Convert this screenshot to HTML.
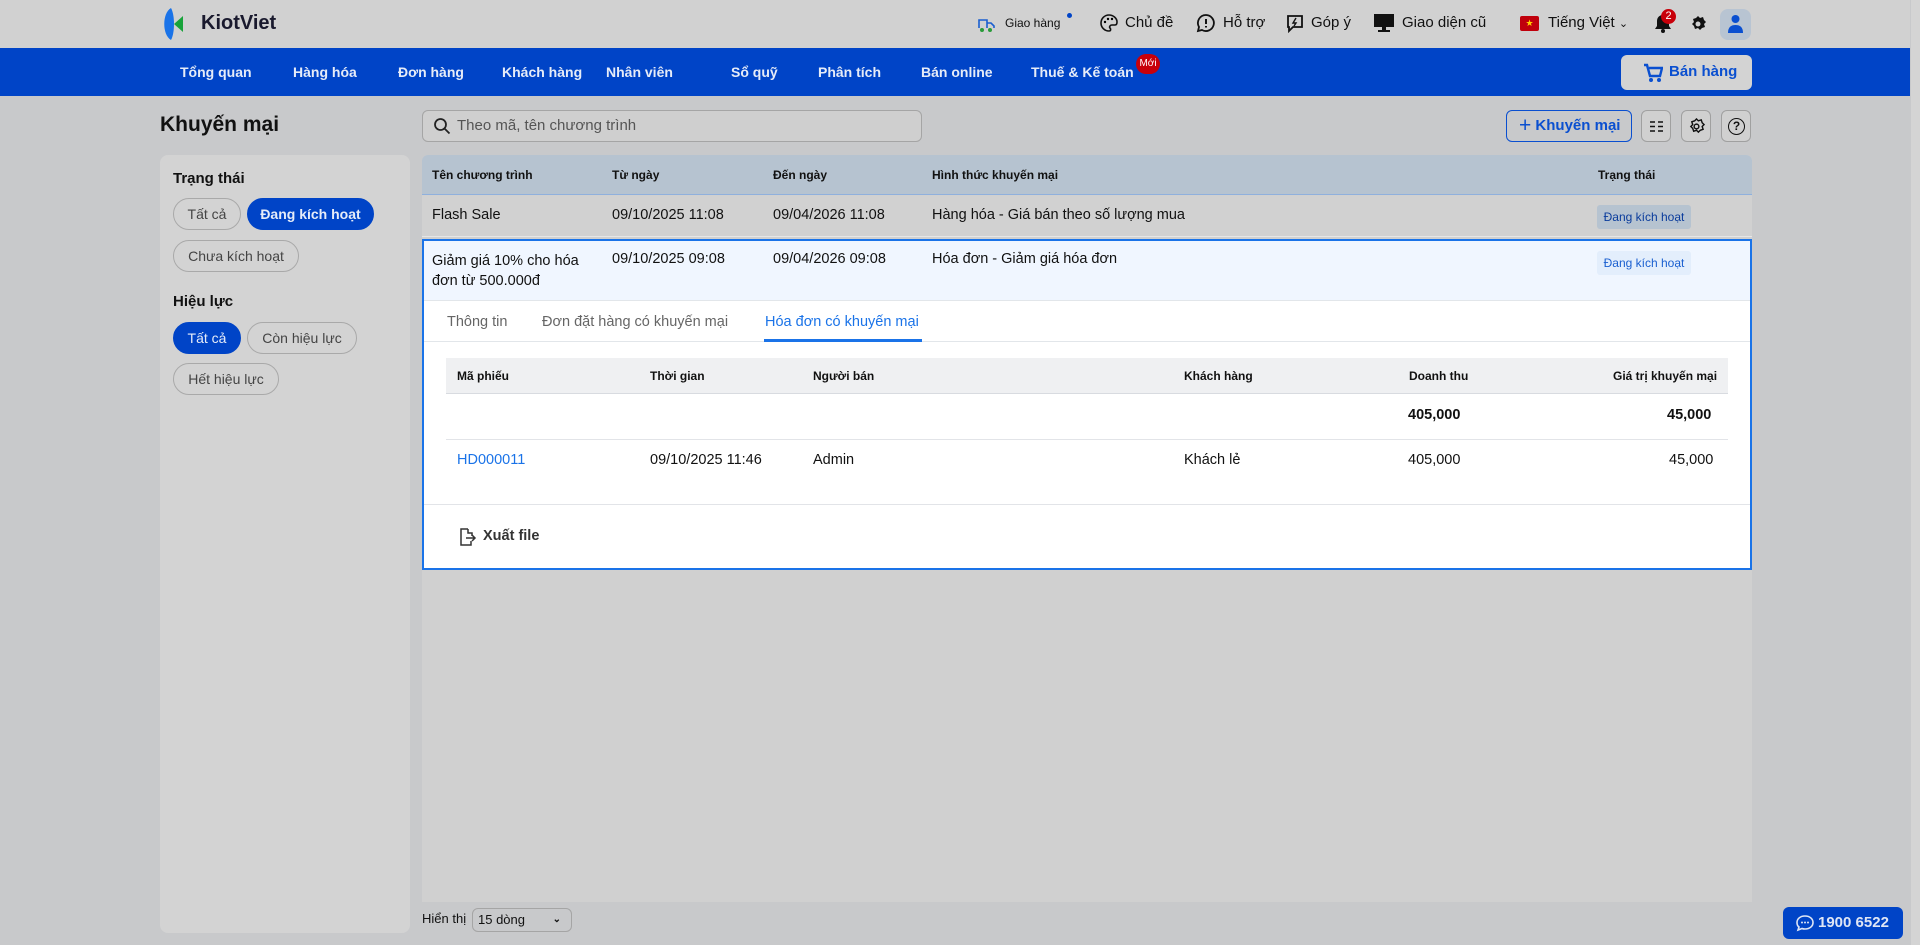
<!DOCTYPE html>
<html><head><meta charset="utf-8">
<style>
*{box-sizing:border-box;margin:0;padding:0}
body{width:1920px;height:945px;background:#c8c9cb;font-family:"Liberation Sans",sans-serif;font-size:14px;color:#111;position:relative;overflow:hidden}
.a{position:absolute}
.top{left:0;top:0;width:1910px;height:48px;background:#d1d1d1}
.nav{left:0;top:48px;width:1910px;height:48px;background:#0044c7}
.nav span{position:absolute;top:16px;color:#e6ecf8;font-weight:bold;font-size:14px;white-space:nowrap}
.tr{top:15px;font-size:14px;color:#111;white-space:nowrap}
.chip{position:absolute;height:32px;border:1px solid #a9a9a9;border-radius:16px;line-height:30px;font-size:14px;color:#444;background:#d3d3d3;text-align:center;white-space:nowrap}
.chip.on{background:#0044c7;border-color:#0044c7;color:#e6ecf8;font-weight:bold}
.th{position:absolute;font-weight:bold;font-size:12px;color:#111;white-space:nowrap}
.td{position:absolute;font-size:14.5px;color:#111;white-space:nowrap}
.ib{position:absolute;top:110px;width:30px;height:32px;border:1px solid #a0a0a0;border-radius:6px;background:#d0d0d0}
</style></head><body>
<div class="a top"></div>
<!-- logo -->
<svg class="a" style="left:159px;top:7px" width="36" height="34" viewBox="0 0 36 34"><path d="M12 1 C3 6 3 28 12 33 C16 26 16 8 12 1Z" fill="#1a73e8"/><path d="M15 17 L24 9 L24 25Z" fill="#18a33a"/></svg>
<div class="a" style="left:201px;top:12px;font-size:20px;font-weight:bold;color:#1a1a2e">KiotViet</div>
<!-- top right -->
<svg class="a" style="left:976px;top:14px" width="20" height="20" viewBox="0 0 20 20"><path d="M3 14V6h8v8M11 9h4l3 3v2" fill="none" stroke="#1a5fd0" stroke-width="1.6"/><circle cx="6" cy="16" r="2" fill="#2a9b3a"/><circle cx="14" cy="16" r="2" fill="#2a9b3a"/></svg>
<div class="a tr" style="left:1005px;font-size:12px;top:16px">Giao hàng</div>
<div class="a" style="left:1067px;top:13px;width:5px;height:5px;border-radius:50%;background:#0044c7"></div>
<svg class="a" style="left:1099px;top:13px" width="20" height="20" viewBox="0 0 20 20"><path d="M10 2a8 8 0 1 0 0 16c2 0 2-2 1-3s0-3 2-3h3c2 0 2-2 2-3 0-4-4-7-8-7z" fill="none" stroke="#111" stroke-width="1.6"/><circle cx="6" cy="9" r="1.2"/><circle cx="9" cy="6" r="1.2"/><circle cx="13" cy="6" r="1.2"/></svg>
<div class="a tr" style="left:1125px;font-size:15px;top:14px">Chủ đề</div>
<svg class="a" style="left:1196px;top:13px" width="20" height="20" viewBox="0 0 20 20"><path d="M10 2a8 8 0 1 1-4 15l-4 1 1-4A8 8 0 0 1 10 2z" fill="none" stroke="#111" stroke-width="1.8"/><path d="M10 6v5M10 13v1.5" stroke="#111" stroke-width="2"/></svg>
<div class="a tr" style="left:1223px;font-size:15px;top:14px">Hỗ trợ</div>
<svg class="a" style="left:1285px;top:13px" width="20" height="20" viewBox="0 0 20 20"><path d="M3 3h14v11H8l-4 4v-4H3z" fill="none" stroke="#111" stroke-width="1.8"/><path d="M11 5l-3 5h3l-2 3" stroke="#111" stroke-width="1.4" fill="none"/></svg>
<div class="a tr" style="left:1311px;font-size:15px;top:14px">Góp ý</div>
<svg class="a" style="left:1373px;top:13px" width="22" height="20" viewBox="0 0 22 20"><rect x="1" y="1" width="20" height="13" fill="#111"/><rect x="9" y="14" width="4" height="3" fill="#111"/><rect x="5" y="17" width="12" height="2" fill="#111"/></svg>
<div class="a tr" style="left:1402px;font-size:15px;top:14px">Giao diện cũ</div>
<div class="a" style="left:1520px;top:16px;width:19px;height:15px;background:#c0000c;border-radius:2px;color:#ffd000;font-size:9px;text-align:center;line-height:15px">★</div>
<div class="a tr" style="left:1548px;font-size:15px;top:14px">Tiếng Việt <span style="font-size:11px">⌄</span></div>
<svg class="a" style="left:1654px;top:12px" width="18" height="22" viewBox="0 0 18 22"><path d="M9 3c-4 0-6 3-6 6v5l-2 3h16l-2-3V9c0-3-2-6-6-6z" fill="#111"/><circle cx="9" cy="19" r="2" fill="#111"/></svg>
<div class="a" style="left:1661px;top:9px;width:15px;height:15px;border-radius:50%;background:#c8000a;color:#fff;font-size:11px;text-align:center;line-height:15px">2</div>
<svg class="a" style="left:1689px;top:15px" width="18" height="18" viewBox="0 0 18 18"><path d="M9 1l2 2 3-1 1 3 2 2-2 2 1 3-3 1-2 2-2-2-3 1-1-3-2-2 2-2-1-3 3-1z" fill="#111"/><circle cx="9" cy="9" r="2.5" fill="#d1d1d1"/></svg>
<div class="a" style="left:1720px;top:9px;width:31px;height:31px;border-radius:8px;background:#b8c4d2"></div>
<svg class="a" style="left:1727px;top:14px" width="17" height="20" viewBox="0 0 17 20"><circle cx="8.5" cy="5" r="4" fill="#0a4fd0"/><path d="M1 19c0-6 3-8 7.5-8s7.5 2 7.5 8z" fill="#0a4fd0"/></svg>
<!-- nav -->
<div class="a nav">
<span style="left:180px">Tổng quan</span><span style="left:293px">Hàng hóa</span><span style="left:398px">Đơn hàng</span><span style="left:502px">Khách hàng</span><span style="left:606px">Nhân viên</span><span style="left:731px">Sổ quỹ</span><span style="left:818px">Phân tích</span><span style="left:921px">Bán online</span><span style="left:1031px">Thuế &amp; Kế toán</span>
<div class="a" style="left:1136px;top:6px;width:24px;height:20px;border-radius:10px;background:#c8000a;color:#fff;font-size:10px;text-align:center;line-height:20px">Mới</div>
<div class="a" style="left:1621px;top:7px;width:131px;height:35px;border-radius:6px;background:#d3d3d3"></div>
<svg class="a" style="left:1643px;top:15px" width="20" height="20" viewBox="0 0 20 20"><path d="M1 2h3l3 11h10l2-8H6" fill="none" stroke="#0a4fd0" stroke-width="2.4"/><circle cx="8" cy="17" r="2" fill="#0a4fd0"/><circle cx="16" cy="17" r="2" fill="#0a4fd0"/></svg>
<div class="a" style="left:1669px;top:15px;color:#0a4fd0;font-weight:bold;font-size:15px">Bán hàng</div>
</div>
<!-- title/search -->
<div class="a" style="left:160px;top:113px;font-size:21px;font-weight:bold">Khuyến mại</div>
<div class="a" style="left:422px;top:110px;width:500px;height:32px;border:1px solid #a5a5a5;border-radius:6px;background:#cfcfcf"></div>
<svg class="a" style="left:433px;top:117px" width="18" height="18" viewBox="0 0 18 18"><circle cx="7.5" cy="7.5" r="5.5" fill="none" stroke="#222" stroke-width="1.8"/><path d="M11.5 11.5l5 5" stroke="#222" stroke-width="1.8"/></svg>
<div class="a" style="left:457px;top:117px;font-size:15px;color:#555">Theo mã, tên chương trình</div>
<div class="a" style="left:1506px;top:110px;width:126px;height:32px;border:1.5px solid #0a4fd0;border-radius:6px;color:#0a4fd0;font-weight:bold;font-size:15px;line-height:29px;padding-left:12px;white-space:nowrap"><span style="font-size:21px;font-weight:normal;vertical-align:-2px">+</span> Khuyến mại</div>
<div class="ib" style="left:1641px"><svg class="a" style="left:8px;top:10px" width="13" height="11" viewBox="0 0 13 11"><path d="M0 1h5M8 1h5M0 5.5h5M8 5.5h5M0 10h5M8 10h5" stroke="#111" stroke-width="1.6"/></svg></div>
<div class="ib" style="left:1681px"><svg class="a" style="left:6px;top:7px" width="17" height="17" viewBox="0 0 18 18"><path d="M9 1l2 2 3-1 1 3 2 2-2 2 1 3-3 1-2 2-2-2-3 1-1-3-2-2 2-2-1-3 3-1z" fill="none" stroke="#111" stroke-width="1.5"/><circle cx="9" cy="9" r="2.5" fill="none" stroke="#111" stroke-width="1.5"/></svg></div>
<div class="ib" style="left:1721px"><div class="a" style="left:6px;top:7px;width:17px;height:17px;border:1.8px solid #111;border-radius:50%;font-size:12px;font-weight:bold;text-align:center;line-height:14px">?</div></div>
<!-- left panel -->
<div class="a" style="left:160px;top:155px;width:250px;height:778px;background:#d3d3d3;border-radius:8px"></div>
<div class="a" style="left:173px;top:170px;font-weight:bold;font-size:15px">Trạng thái</div>
<div class="chip" style="left:173px;top:198px;width:68px">Tất cả</div>
<div class="chip on" style="left:247px;top:198px;width:127px">Đang kích hoạt</div>
<div class="chip" style="left:173px;top:240px;width:126px">Chưa kích hoạt</div>
<div class="a" style="left:173px;top:293px;font-weight:bold;font-size:15px">Hiệu lực</div>
<div class="chip on" style="left:173px;top:322px;width:68px;font-weight:normal">Tất cả</div>
<div class="chip" style="left:247px;top:322px;width:110px">Còn hiệu lực</div>
<div class="chip" style="left:173px;top:363px;width:106px">Hết hiệu lực</div>
<!-- table -->
<div class="a" style="left:422px;top:155px;width:1330px;height:747px;background:#d0d0d0;border-radius:6px 6px 0 0"></div>
<div class="a" style="left:422px;top:155px;width:1330px;height:40px;background:#b6c3d0;border-bottom:1px solid #8fb0dd;border-radius:6px 6px 0 0"></div>
<div class="th" style="left:432px;top:168px">Tên chương trình</div>
<div class="th" style="left:612px;top:168px">Từ ngày</div>
<div class="th" style="left:773px;top:168px">Đến ngày</div>
<div class="th" style="left:932px;top:168px">Hình thức khuyến mại</div>
<div class="th" style="left:1598px;top:168px">Trạng thái</div>
<div class="a" style="left:422px;top:196px;width:1330px;height:41px;background:#d1d1d1;border-bottom:1px solid #e6e6e6"></div>
<div class="td" style="left:432px;top:207px">Flash Sale</div>
<div class="td" style="left:612px;top:207px">09/10/2025 11:08</div>
<div class="td" style="left:773px;top:207px">09/04/2026 11:08</div>
<div class="td" style="left:932px;top:207px">Hàng hóa - Giá bán theo số lượng mua</div>
<div class="a" style="left:1597px;top:205px;width:94px;height:24px;background:#b6c3d0;border-radius:3px;font-size:12px;color:#0a3c9c;text-align:center;line-height:24px">Đang kích hoạt</div>
<!-- expanded -->
<div class="a" style="left:422px;top:239px;width:1330px;height:331px;background:#fff;border:2px solid #1a73e8"></div>
<div class="a" style="left:424px;top:241px;width:1326px;height:60px;background:#f0f6ff;border-bottom:1px solid #e2e6ea"></div>
<div class="td" style="left:432px;top:251px;line-height:20px">Giảm giá 10% cho hóa<br>đơn từ 500.000đ</div>
<div class="td" style="left:612px;top:251px">09/10/2025 09:08</div>
<div class="td" style="left:773px;top:251px">09/04/2026 09:08</div>
<div class="td" style="left:932px;top:251px">Hóa đơn - Giảm giá hóa đơn</div>
<div class="a" style="left:1597px;top:251px;width:94px;height:24px;background:#e3eefc;border-radius:3px;font-size:12px;color:#1a5fd0;text-align:center;line-height:24px">Đang kích hoạt</div>
<div class="a" style="left:424px;top:341px;width:1326px;height:1px;background:#e2e6ea"></div>
<div class="td" style="left:447px;top:314px;color:#666">Thông tin</div>
<div class="td" style="left:542px;top:314px;color:#666">Đơn đặt hàng có khuyến mại</div>
<div class="td" style="left:765px;top:314px;color:#1a73e8">Hóa đơn có khuyến mại</div>
<div class="a" style="left:764px;top:339px;width:158px;height:3px;background:#1a73e8"></div>
<div class="a" style="left:446px;top:358px;width:1282px;height:36px;background:#eff0f2;border-bottom:1px solid #d8dbe0"></div>
<div class="th" style="left:457px;top:369px">Mã phiếu</div>
<div class="th" style="left:650px;top:369px">Thời gian</div>
<div class="th" style="left:813px;top:369px">Người bán</div>
<div class="th" style="left:1184px;top:369px">Khách hàng</div>
<div class="th" style="left:1409px;top:369px">Doanh thu</div>
<div class="th" style="left:1613px;top:369px">Giá trị khuyến mại</div>
<div class="td" style="left:1408px;top:407px;font-weight:bold">405,000</div>
<div class="td" style="left:1667px;top:407px;font-weight:bold">45,000</div>
<div class="a" style="left:446px;top:439px;width:1282px;height:1px;background:#e2e4e8"></div>
<div class="td" style="left:457px;top:452px;color:#1a73e8">HD000011</div>
<div class="td" style="left:650px;top:452px">09/10/2025 11:46</div>
<div class="td" style="left:813px;top:452px">Admin</div>
<div class="td" style="left:1184px;top:452px">Khách lẻ</div>
<div class="td" style="left:1408px;top:452px">405,000</div>
<div class="td" style="left:1669px;top:452px">45,000</div>
<div class="a" style="left:424px;top:504px;width:1326px;height:1px;background:#e2e4e8"></div>
<svg class="a" style="left:457px;top:527px" width="20" height="20" viewBox="0 0 20 20"><path d="M11 2H4v16h10v-4M11 2v4h4v3" fill="none" stroke="#333" stroke-width="1.5"/><path d="M9 11h9M15 8l3 3-3 3" fill="none" stroke="#333" stroke-width="1.5"/></svg>
<div class="td" style="left:483px;top:528px;font-weight:bold;color:#333">Xuất file</div>
<!-- footer -->
<div class="td" style="left:422px;top:911px;font-size:13px">Hiển thị</div>
<div class="a" style="left:472px;top:908px;width:100px;height:24px;border:1px solid #a5a5a5;border-radius:6px;font-size:13px;padding-left:5px;line-height:22px">15 dòng<span style="position:absolute;right:10px;font-size:10px;font-weight:bold">⌄</span></div>
<div class="a" style="left:1783px;top:907px;width:120px;height:32px;background:#0044c7;border-radius:6px;color:#dfe6f5;font-weight:bold;font-size:15px;line-height:32px;padding-left:35px">1900 6522</div>
<svg class="a" style="left:1795px;top:914px" width="20" height="18" viewBox="0 0 20 18"><path d="M10 2c5 0 8 3 8 6.5S15 15 10 15c-1 0-2 0-3-.5L3 16l1-3C2.5 12 2 10 2 8.5 2 5 5 2 10 2z" fill="none" stroke="#dfe6f5" stroke-width="1.6"/><circle cx="7" cy="8.5" r="1" fill="#dfe6f5"/><circle cx="10" cy="8.5" r="1" fill="#dfe6f5"/><circle cx="13" cy="8.5" r="1" fill="#dfe6f5"/></svg>
<div class="a" style="left:1911px;top:0;width:9px;height:945px;background:#d4d4d4"></div>
</body></html>
